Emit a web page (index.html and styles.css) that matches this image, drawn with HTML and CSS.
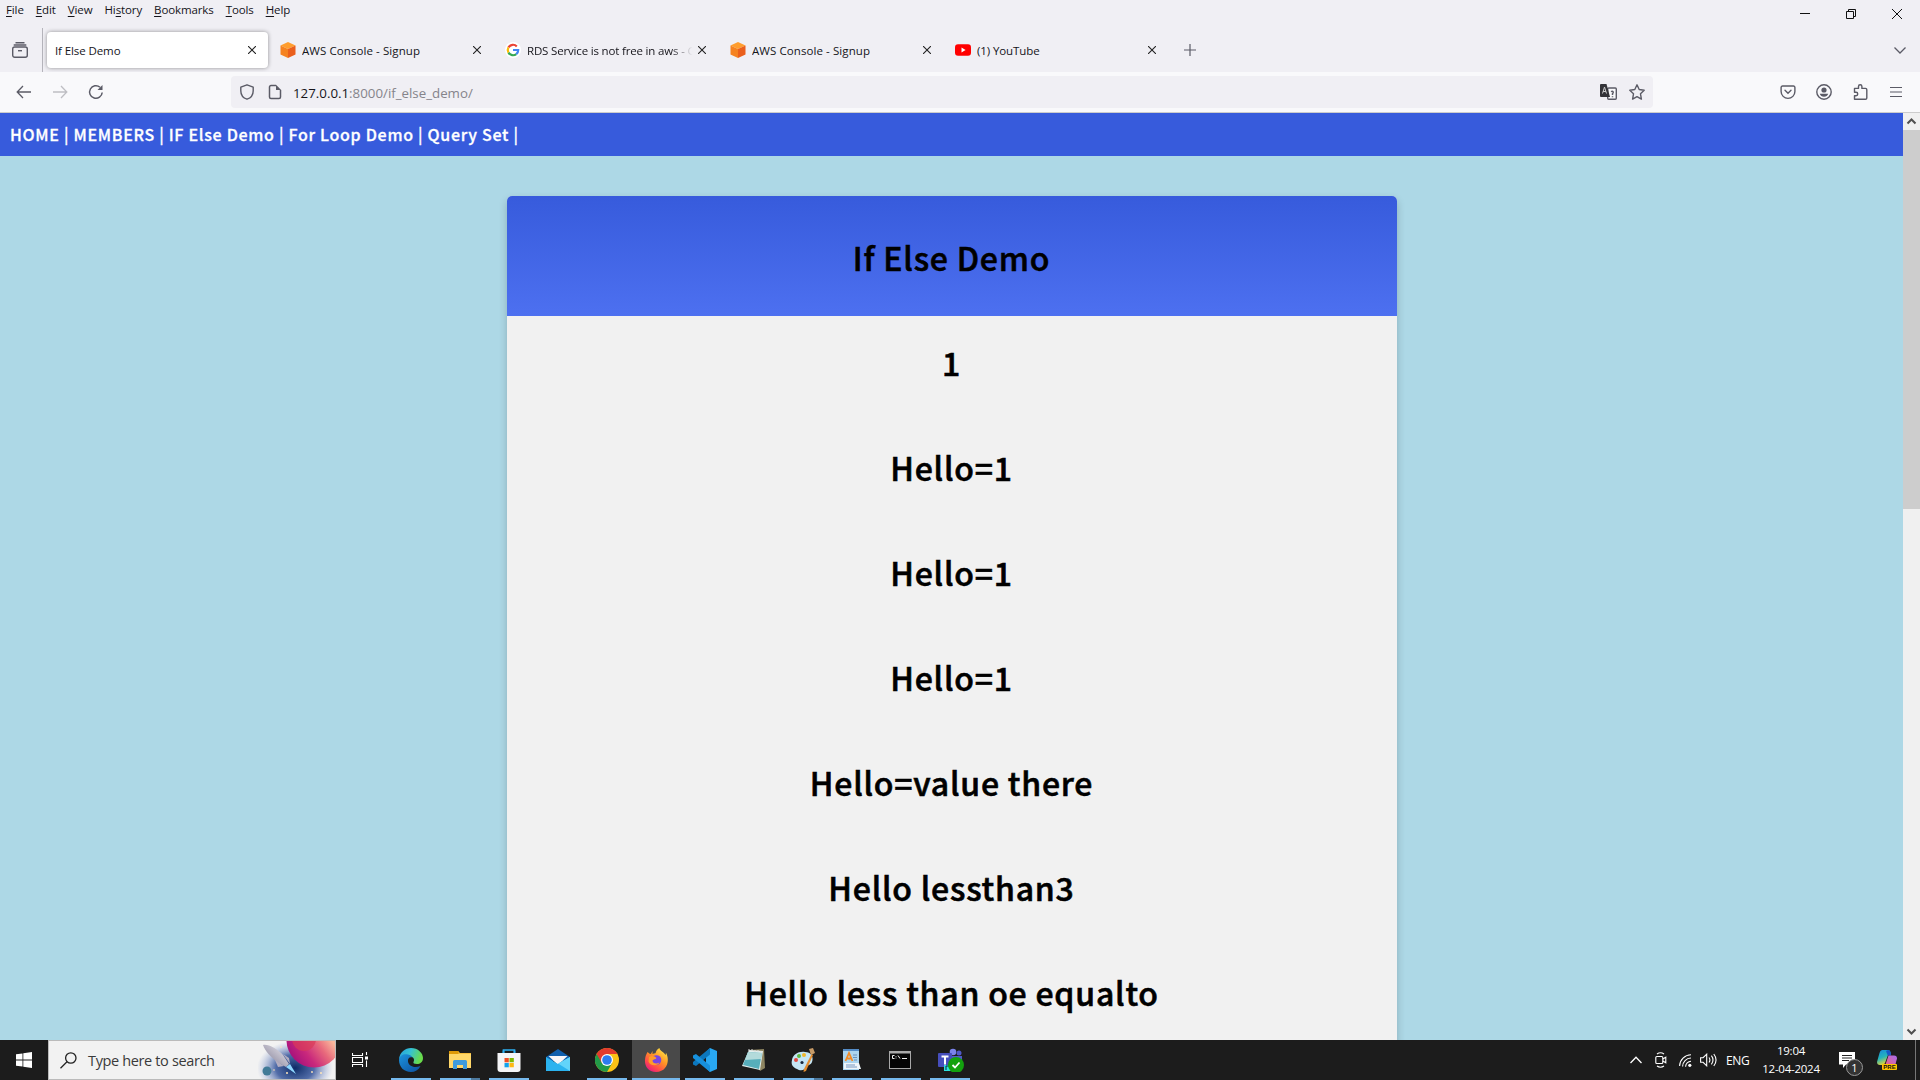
FILE: index.html
```html
<!DOCTYPE html>
<html lang="en">
<head>
<meta charset="utf-8">
<title>If Else Demo</title>
<link rel="stylesheet" href="styles.css">
</head>
<body>
<div class="screen">
  <header class="titlebar">
    <nav class="menus"><span><u>F</u>ile</span><span><u>E</u>dit</span><span><u>V</u>iew</span><span>Hi<u>s</u>tory</span><span><u>B</u>ookmarks</span><span><u>T</u>ools</span><span><u>H</u>elp</span></nav>
    <div class="winbtns">
      <svg width="10" height="10" viewBox="0 0 10 10"><path d="M0 4.500h10" stroke="#111" stroke-width="1"/></svg>
      <svg width="10" height="10" viewBox="0 0 10 10" fill="none" stroke="#111"><path d="M.5 2.500h7v7h-7zM2.500 2.500V.5h7v7h-2"/></svg>
      <svg width="10" height="10" viewBox="0 0 10 10" stroke="#111"><path d="M0 0l10 10M10 0L0 10"/></svg>
    </div>
  </header>

  <div class="tabs">
    <div class="recent"><svg width="16" height="16" viewBox="0 0 16 16" fill="none" stroke="#5b5b66" stroke-width="1.4"><path d="M3.500.7h9M1.700 3h12.600"/><rect x=".7" y="5" width="14.600" height="10.300" rx="2"/><path d="M6 8.700h4"/></svg></div>
    <div class="tab active"><span class="label">If Else Demo</span><svg class="x" viewBox="0 0 8 8"><path d="M0 0l8 8M8 0L0 8"/></svg></div>
    <div class="tab"><svg class="fav" viewBox="0 0 16 16"><path d="M8 0l7.500 3.500L8 7 .5 3.500z" fill="#ff9d2e"/><path d="M.5 3.500L8 7v9L.5 12.500z" fill="#f58220"/><path d="M15.500 3.500L8 7v9l7.500-3.500z" fill="#ea5f1c"/></svg><span class="label aws">AWS Console - Signup</span><svg class="x" viewBox="0 0 8 8"><path d="M0 0l8 8M8 0L0 8"/></svg></div>
    <div class="tab"><svg class="fav" viewBox="0 0 16 16"><circle cx="8" cy="8" r="8" fill="#fff"/><g fill="none" stroke-width="2.200"><path d="M11.800 4.400A5.200 5.200 0 0 0 3.500 5.400" stroke="#ea4335"/><path d="M3.500 5.400a5.200 5.200 0 0 0 0 5.200" stroke="#fbbc05"/><path d="M3.500 10.600a5.200 5.200 0 0 0 7.800 1.500" stroke="#34a853"/><path d="M11.300 12.100A5.200 5.200 0 0 0 13.200 8H8" stroke="#4285f4"/></g></svg><span class="label fade">RDS Service is not free in aws - G</span><svg class="x" viewBox="0 0 8 8"><path d="M0 0l8 8M8 0L0 8"/></svg></div>
    <div class="tab"><svg class="fav" viewBox="0 0 16 16"><path d="M8 0l7.500 3.500L8 7 .5 3.500z" fill="#ff9d2e"/><path d="M.5 3.500L8 7v9L.5 12.500z" fill="#f58220"/><path d="M15.500 3.500L8 7v9l7.500-3.500z" fill="#ea5f1c"/></svg><span class="label aws">AWS Console - Signup</span><svg class="x" viewBox="0 0 8 8"><path d="M0 0l8 8M8 0L0 8"/></svg></div>
    <div class="tab"><svg class="fav" viewBox="0 0 16 16"><rect y="2.300" width="16" height="11.400" rx="3" fill="#f00"/><path d="M6.500 5.600v4.800L10.600 8z" fill="#fff"/></svg><span class="label">(1) YouTube</span><svg class="x" viewBox="0 0 8 8"><path d="M0 0l8 8M8 0L0 8"/></svg></div>
    <svg class="plus" width="12" height="12" viewBox="0 0 12 12" stroke="#5b5b66" stroke-width="1.200"><path d="M6 0v12M0 6h12"/></svg>
    <svg class="alltabs" width="12" height="7" viewBox="0 0 12 7" fill="none" stroke="#5b5b66" stroke-width="1.300"><path d="M.5.5L6 6l5.500-5.500"/></svg>
  </div>

  <div class="toolbar">
    <div class="navbtns">
      <svg width="16" height="16" viewBox="0 0 16 16" fill="none" stroke="#5b5b66" stroke-width="1.300"><path d="M15 8H1.500M7 2L1.200 8 7 14"/></svg>
      <svg width="16" height="16" viewBox="0 0 16 16" fill="none" stroke="#bebec3" stroke-width="1.300"><path d="M1 8h13.500M9 2l5.800 6L9 14"/></svg>
      <svg width="16" height="16" viewBox="0 0 16 16" fill="none" stroke="#5b5b66" stroke-width="1.500"><path d="M14.200 8.500A6.300 6.300 0 1 1 12 3.200"/><path d="M14.500 1v5h-5z" fill="#5b5b66" stroke="none"/></svg>
    </div>
    <div class="urlbar">
      <svg width="16" height="16" viewBox="0 0 16 16" fill="none" stroke="#5b5b66" stroke-width="1.400" stroke-linejoin="round"><path d="M8 .8l6.200 2.300v3.600c0 3.900-2.600 7.300-6.200 8.500-3.600-1.200-6.200-4.600-6.200-8.500V3.100z"/></svg>
      <svg width="16" height="16" viewBox="0 0 16 16" fill="none" stroke="#5b5b66" stroke-width="1.500"><path d="M9 1.500H4A1.500 1.500 0 0 0 2.500 3v10A1.500 1.500 0 0 0 4 14.500h8a1.500 1.500 0 0 0 1.500-1.500V6"/><path d="M9 .8L14.200 6H9z" fill="#5b5b66" stroke="none"/></svg>
      <span class="url">127.0.0.1<i>:8000/if_else_demo/</i></span>
      <svg class="tr" width="17" height="16" viewBox="0 0 17 16"><rect x="7.700" y="4" width="8.600" height="11.300" rx="1" fill="#f9f9fb" stroke="#5b5b66" stroke-width="1.400"/><path d="M1 0h5.500L10 13H1a1 1 0 0 1-1-1V1a1 1 0 0 1 1-1z" fill="#333338"/><path d="M2.500 9.500L4.500 3l2 6.500M3 7.500h3" stroke="#ccc" fill="none"/><path d="M11 7.700c2-1 3 .5 1.500 2V11M12.500 12.300v1" stroke="#5b5b66" stroke-width="1.500" fill="none"/></svg>
      <svg width="16" height="16" viewBox="0 0 16 16" fill="none" stroke="#5b5b66" stroke-width="1.400" stroke-linejoin="round"><path d="M8 .8l2.200 4.700 5 .7-3.700 3.600.9 5.300L8 12.600l-4.400 2.500.9-5.300L.8 6.200l5-.7z"/></svg>
    </div>
    <div class="tools">
      <svg width="16" height="16" viewBox="0 0 16 16" fill="none" stroke="#5b5b66" stroke-width="1.400" stroke-linecap="round"><path d="M2.500 2h11a1.400 1.400 0 0 1 1.400 1.400V7.500a6.900 6.900 0 0 1-13.800 0V3.400A1.400 1.400 0 0 1 2.500 2zM5 6.200l3 3 3-3"/></svg>
      <svg width="16" height="16" viewBox="0 0 16 16"><circle cx="8" cy="8" r="7.200" fill="none" stroke="#5b5b66" stroke-width="1.400"/><circle cx="8" cy="6" r="2.600" fill="#5b5b66"/><path d="M3.800 9.800h8.400c-.5 1.900-2.100 3-4.200 3s-3.700-1.100-4.200-3z" fill="#5b5b66"/></svg>
      <svg width="16" height="16" viewBox="0 0 16 16" fill="none" stroke="#5b5b66" stroke-width="1.400" stroke-linejoin="round"><path d="M1.500 7V4.400h4V2.500a1.700 1.700 0 0 1 3.400 0v1.900h3.600A1.300 1.300 0 0 1 13.800 5.700v8.200a1.300 1.300 0 0 1-1.300 1.300h-11v-3.400H3a1.700 1.700 0 0 0 0-3.500H1.500z"/></svg>
      <svg width="14" height="12" viewBox="0 0 14 12" stroke="#5b5b66" stroke-width="1.200"><path d="M1 1.500h12M1 6h12M1 10.500h12"/></svg>
    </div>
  </div>

  <div class="viewport">
    <main class="page">
      <nav class="sitenav">HOME | MEMBERS | IF Else Demo | For Loop Demo | Query Set |</nav>
      <section class="card">
        <h1 class="cardhead">If Else Demo</h1>
        <div class="rows"><h1>1</h1><h1>Hello=1</h1><h1>Hello=1</h1><h1>Hello=1</h1><h1>Hello=value there</h1><h1>Hello lessthan3</h1><h1>Hello less than oe equalto</h1></div>
      </section>
    </main>
    <aside class="scroll">
      <svg width="17" height="17" viewBox="0 0 17 17" fill="none" stroke="#505050" stroke-width="2"><path d="M4.500 10.500l4-4 4 4"/></svg>
      <div class="thumb"></div>
      <svg width="17" height="17" viewBox="0 0 17 17" fill="none" stroke="#505050" stroke-width="2"><path d="M4.500 6.500l4 4 4-4"/></svg>
    </aside>
  </div>

  <footer class="taskbar">
    <div class="start"><svg width="16" height="16" viewBox="0 0 16 16" fill="#fff"><path d="M0 2.300L6.500 1.400v6.200H0zM7.300 1.300L16 0v7.600H7.300zM0 8.400h6.500v6.200L0 13.700zM7.300 8.400H16V16l-8.700-1.300z"/></svg></div>
    <div class="search">
      <svg width="17" height="17" viewBox="0 0 17 17" fill="none" stroke="#222" stroke-width="1.300"><circle cx="10.800" cy="6" r="5.200"/><path d="M7 9.800L.5 16.300"/></svg>
      <span>Type here to search</span>
      <svg class="art" width="77" height="38" viewBox="0 0 77 38">
        <defs>
          <radialGradient id="sky"><stop offset="0" stop-color="#0d2b66"/><stop offset=".5" stop-color="#34549a" stop-opacity=".85"/><stop offset="1" stop-color="#8fa4d8" stop-opacity="0"/></radialGradient>
          <linearGradient id="planet" gradientUnits="userSpaceOnUse" x1="40" y1="26" x2="74" y2="0"><stop offset="0" stop-color="#a3107c"/><stop offset=".35" stop-color="#c9287c"/><stop offset=".7" stop-color="#e86a7c"/><stop offset="1" stop-color="#f9b79c"/></linearGradient>
          <linearGradient id="rocket" x1="0" y1="1" x2="1" y2="0"><stop offset="0" stop-color="#77738c"/><stop offset="1" stop-color="#f1eff4"/></linearGradient>
        </defs>
        <ellipse cx="37" cy="27" rx="38" ry="27" fill="url(#sky)"/>
        <circle cx="56" cy="-1" r="27.500" fill="url(#planet)"/>
        <circle cx="46" cy="-2" r="12" fill="#d83a58" opacity=".7"/>
        <circle cx="9" cy="30" r="4.500" fill="#417a97"/>
        <path d="M5 4c6-1 14 4 20 10l6 9-3 3-9-5C13 16 7 10 5 4z" fill="url(#rocket)"/>
        <path d="M17 19l3 7 6-1zM25 13l6 4 1 6z" fill="#b3adbf"/>
        <path d="M28 26l4-3 6 10z" fill="#8fd8ff"/>
        <g fill="#ffe6b8"><circle cx="16" cy="29" r=".8"/><circle cx="29" cy="32" r="1"/><circle cx="54" cy="31" r=".9"/><circle cx="63" cy="32" r="1"/><circle cx="23" cy="6" r=".8"/></g>
      </svg>
    </div>
    <div class="taskview"><svg width="16" height="16" viewBox="0 0 16 16" fill="none" stroke="#fff" stroke-width="1.100"><path d="M.5 1v2.500h10V1M.5 15v-2.500h10V15M.5 5.500h10v5H.5zM14.500 0v3M14.500 8.500V15"/><path d="M13 4.500h3v3h-3z" fill="#fff" stroke="none"/></svg></div>
    <div class="apps">
      <div class="app run"><svg viewBox="0 0 24 24"><defs><linearGradient id="e1" x1="0" y1="0" x2="1" y2=".3"><stop offset="0" stop-color="#249fdc"/><stop offset=".5" stop-color="#35c1d4"/><stop offset="1" stop-color="#69dc4b"/></linearGradient><linearGradient id="e2" x1="0" y1="0" x2="1" y2="1"><stop offset="0" stop-color="#1c93dd"/><stop offset="1" stop-color="#0d4f9e"/></linearGradient></defs><path d="M0 11C1 4 6 0 12 0c7 0 12 5 12 10 0 4-3 6-6 6-3 0-4-1-3.500-2 1.500-2.500 0-5.500-4-5.500C6 8.500 2 9 0 11z" fill="url(#e1)"/><path d="M0 12c.5-5 5-6.500 9-5.500 2.500.6 4 2 4.500 3-3-1-5 1-4.500 4C9.700 18 15 20.500 21.500 18 19.500 22 16 24 12 24 5 24 0 19 0 12z" fill="url(#e2)"/></svg></div>
      <div class="app run multi"><svg viewBox="0 0 24 24"><path d="M1 3h9l2 2h11v15H1z" fill="#f6bd3c"/><path d="M1 3h9.500v3H1z" fill="#df9a08"/><path d="M1 6h22v14H1z" fill="#ffd769"/><path d="M5 21v-7.500Q5 12 6.500 12h11q1.500 0 1.500 1.500V21h-4v-4H9v4z" fill="#3e9bdb"/></svg></div>
      <div class="app run"><svg viewBox="0 0 24 24"><path d="M6.500 7V2h11v5" fill="none" stroke="#2caef0" stroke-width="1.700"/><path d="M.5 5h23v16q0 3-3 3h-17q-3 0-3-3z" fill="#f5f5f7"/><path d="M6.500 5V2.500M17.500 5V2.500" stroke="#2caef0" stroke-width="1.700"/><path d="M7.500 10h4.300v4.300H7.500z" fill="#f04f24"/><path d="M12.500 10h4.300v4.300h-4.300z" fill="#7fb900"/><path d="M7.500 15h4.300v4.300H7.500z" fill="#13a2ec"/><path d="M12.500 15h4.300v4.300h-4.300z" fill="#fdb813"/></svg></div>
      <div class="app"><svg viewBox="0 0 24 24"><path d="M0 9L12 1l12 8v4H0z" fill="#0f5fad"/><path d="M2.500 8h19L12 17z" fill="#f6f6f8"/><path d="M0 9l12 7 12-7v14H0z" fill="#2bb3ef"/><path d="M24 9v14L12 15.500z" fill="#62d4fa"/></svg></div>
      <div class="app run"><svg viewBox="0 0 24 24"><circle cx="12" cy="12" r="12" fill="#fbc116"/><path d="M1.600 6A12 12 0 0 0 12 24l5.200-9L12 12z" fill="#229a48"/><path d="M1.600 6A12 12 0 0 1 22.400 6H12L6.800 15z" fill="#e33b2e"/><circle cx="12" cy="12" r="6" fill="#fff"/><circle cx="12" cy="12" r="4.800" fill="#2d7cf0"/></svg></div>
      <div class="app run current"><svg viewBox="0 0 24 24"><defs><linearGradient id="ff" x1=".9" y1="0" x2=".2" y2="1"><stop offset="0" stop-color="#fff04a"/><stop offset=".45" stop-color="#ff9425"/><stop offset=".75" stop-color="#ff4b4a"/><stop offset="1" stop-color="#e31587"/></linearGradient></defs><path d="M3.500 4l2.500 2 1-.2L8.500 3v3c1-.5 2-.7 3-.7C12 3 13 1 15.500 0c0 3 4 3.500 6 7 .5-.8.500-1.500.3-2.500C26 11 24 24 12 24 4 24 .5 18 1 12c.2-3 1-5.500 2.500-8z" fill="url(#ff)"/><circle cx="12.500" cy="12" r="4.800" fill="#7845e3"/><path d="M5 9c3-2 6-1 7.500 1-1 1.700-3 1-4 2.500 0 3 4 4 7 2-2 4-10 3.500-11-1z" fill="#ff9b29"/></svg></div>
      <div class="app run"><svg viewBox="0 0 24 24"><path d="M17 0l7 3v18l-7 3-4-4V4z" fill="#29a8f2"/><path d="M17 0v6.500L3 18 0 16.500 0 14z" fill="#0c77bd"/><path d="M17 24v-6.500L3 6 0 7.500V10z" fill="#1790dc"/></svg></div>
      <div class="app run"><svg viewBox="0 0 24 24"><path d="M7 2l15-1 1 19-5 3z" fill="#8e8561"/><path d="M7 2l14 1-3 19L0 18z" fill="#e4f0ef"/><path d="M6 4l14 1-3 16L1 17z" fill="#57aebb"/><path d="M6 4l14 1-1 6L3 12z" fill="#b3dbdb"/><path d="M7 1v2m3-2v2m3-1v2m3-2v2m3-1v2" stroke="#ddd"/></svg></div>
      <div class="app run multi"><svg viewBox="0 0 24 24"><path d="M1 12C2 6 8 3 14 4c6 0 9 5 7 10-1 3-4 3-5 4-2 5-7 5-10 3C1 19 0 16 1 12z" fill="#c4e5f4"/><circle cx="5" cy="12" r="2" fill="#e1473f"/><circle cx="8" cy="8" r="2" fill="#5db943"/><circle cx="13" cy="7" r="2" fill="#f1b62c"/><circle cx="11" cy="14.500" r="1.600" fill="#17283f"/><path d="M20.500 6l1.500 1-7 16-2.500 1 .5-3z" fill="#e38d30"/><path d="M18 1l4-1 2 5-4 2z" fill="#c79b67"/></svg></div>
      <div class="app run"><svg viewBox="0 0 24 24"><path d="M3 1h16v21H3z" fill="#acd5ef"/><path d="M3 1h16v2H3z" fill="#548cc7"/><path d="M4 15h15l2 6H4z" fill="#eef5fa"/><path d="M5.500 13L9 5l3.500 8M7 10.500h4" stroke="#f28a24" stroke-width="1.800" fill="none"/><path d="M13 7h4m-4 2.500h4m-3 2.500h3M6 17h9M6 19h11" stroke="#587fae" stroke-width=".8"/></svg></div>
      <div class="app run"><svg viewBox="0 0 24 24"><path d="M0 3h22v18H0z" fill="#a9a9a9"/><path d="M1 5.500h20V20H1z" fill="#050505"/><path d="M5.500 7.500H3.500v3h2M7 8v.7m0 1v.7M9 7.500l2 3M13 10.500h5" stroke="#eee" fill="none"/></svg></div>
      <div class="app run teams"><svg viewBox="0 0 26 24"><circle cx="15" cy="4" r="3.300" fill="#7b83eb"/><circle cx="21" cy="5" r="2.500" fill="#5059c9"/><path d="M11 8h13v8q-3 6-10 4z" fill="#5059c9"/><rect y="5" width="14" height="14" rx="1" fill="#464ebc"/><path d="M3.500 8.500h7M7 8.500v8" stroke="#fff" stroke-width="2"/><path d="M6 17h7v6H6z" fill="#2ce3dd"/><path d="M8 22v-4h3" stroke="#124" fill="none"/><circle cx="18" cy="17" r="8" fill="#13a10e"/><path d="M14.500 17l2.500 2.500 4.500-5" stroke="#fff" stroke-width="1.800" fill="none"/></svg></div>
    </div>
    <div class="tray">
      <svg class="chev" width="12" height="8" viewBox="0 0 12 8" fill="none" stroke="#fff" stroke-width="1.300"><path d="M.5 7L6 1.200 11.500 7"/></svg>
      <svg class="meet" width="12" height="16" viewBox="0 0 12 16" fill="none" stroke="#fff" stroke-width="1.100"><rect x=".8" y="4.500" width="7" height="7" rx="1"/><path d="M7.800 7l3-1.700v5.500l-3-1.700M2 2q3.500-2.500 7 0M2 14q3.500 2.500 7 0"/></svg>
      <svg class="wifi" width="13" height="13" viewBox="0 0 13 13" fill="none" stroke="#fff" stroke-width="1.100"><path d="M.6 12A11.500 11.500 0 0 1 12 .8M3.600 12.500A8.500 8.500 0 0 1 12 4M6.600 12.700A5.500 5.500 0 0 1 12 7.200"/><circle cx="10.800" cy="11.300" r="1.600" fill="#fff" stroke="none"/></svg>
      <svg class="vol" width="17" height="14" viewBox="0 0 17 14" fill="none" stroke="#fff" stroke-width="1.100"><path d="M.6 4.700h2.500L6.700 1.200v11.600L3.100 9.300H.6zM9 4.500q1.800 2.500 0 5M11.400 2.700q3.200 4.300 0 8.600M13.800 1q4.500 6 0 12"/></svg>
      <span class="lang">ENG</span>
      <div class="clock"><span>19:04</span><span>12-04-2024</span></div>
      <div class="note"><svg width="16" height="16" viewBox="0 0 16 16"><path d="M0 0h16v12.500H7L4 16v-3.500H0z" fill="#fff"/><path d="M3 3.500h10M3 6h10M3 8.500h7" stroke="#222"/></svg><b>1</b></div>
      <div class="copilot"><svg width="20" height="20" viewBox="0 0 20 20"><defs><linearGradient id="c1" x1="0" y1="0" x2=".4" y2="1"><stop offset="0" stop-color="#1687df"/><stop offset=".55" stop-color="#25b4ba"/><stop offset="1" stop-color="#e8d736"/></linearGradient><linearGradient id="c2" x1="1" y1="0" x2="0" y2="1"><stop offset="0" stop-color="#a66bf0"/><stop offset="1" stop-color="#f2637c"/></linearGradient></defs><path d="M5 0h6q2 0 2.500 2l.5 3h-3L8 13q-.7 2-3 2H3q-3 0-3-3l2.500-9Q3 .5 5 0z" fill="url(#c1)"/><path d="M11 0q2 0 2.500 2l.7 3.500h-3.500L9 1z" fill="#1858c7"/><path d="M11.500 5.500H17q3 0 3 3L18 16H8z" fill="url(#c2)"/></svg><em>PRE</em></div>
      <div class="desk"></div>
    </div>
  </footer>
</div>
</body>
</html>
```
FILE: styles.css
```css
* { box-sizing: border-box; }
body { margin: 0; font-family: "Open Sans", "Noto Sans", sans-serif; color: #15141a; }
svg { display: block; flex: none; }
.screen { width: 1920px; height: 1080px; display: flex; flex-direction: column; overflow: hidden; background: #f0eff4; }

.titlebar { height: 28px; display: flex; justify-content: space-between; }
.menus { display: flex; gap: 12px; padding: 2px 0 0 6px; font-size: 11.500px; line-height: 16px; letter-spacing: -.11px; }
.menus u { text-underline-offset: 2px; }
.winbtns { display: flex; gap: 36px; padding: 9px 18px 0 0; }

.tabs { height: 44px; display: flex; align-items: center; padding: 0 14px 0 12px; }
.recent { width: 31px; height: 44px; display: flex; align-items: center; border-right: 1px solid #b5b4bb; margin-right: 4px; }
.tab { width: 221px; height: 36px; margin-right: 4px; border-radius: 4px; display: flex; align-items: center; gap: 6px; padding: 0 12px 0 8px; font-size: 11.500px; letter-spacing: -.1px; }
.tab.active { background: #fff; box-shadow: 0 0 4px rgba(0,0,0,.4); }
.fav { width: 16px; height: 16px; }
.label { flex: 1; min-width: 0; white-space: nowrap; overflow: hidden; }
.label.aws { letter-spacing: .08px; }
.label.fade { letter-spacing: -.17px; margin-right: -4px; mask-image: linear-gradient(90deg, #000 85%, transparent 98%); }
.x { width: 8px; height: 8px; stroke: #222; stroke-width: 1.100; }
.plus { margin-left: 12px; }
.alltabs { margin-left: auto; }

.toolbar { height: 41px; background: #f9f9fb; border-bottom: 1px solid #ccc; display: flex; align-items: center; }
.navbtns { width: 231px; display: flex; gap: 20px; padding-left: 16px; }
.urlbar { width: 1422px; height: 32px; border-radius: 4px; background: #f0eff4; display: flex; align-items: center; gap: 12px; padding: 0 8px; }
.url { flex: 1; margin-left: -2px; padding-top: 1px; font-size: 13.300px; letter-spacing: 0; }
.url i { font-style: normal; color: #85848b; }
.tools { flex: 1; display: flex; align-items: center; justify-content: space-between; padding: 0 17px 0 127px; }

.viewport { height: 927px; display: flex; }
.page { flex: 1; background: #add8e6; overflow: hidden; font-family: "Noto Sans CJK JP", sans-serif; }
.sitenav { height: 43px; background: #375bdc; color: #fff; font-size: 16px; font-weight: 500; line-height: 43px; padding-left: 10px; letter-spacing: .71px; white-space: pre; -webkit-text-stroke: .3px #fff; }
.card { width: 890px; height: 1400px; margin: 40px auto 0; background: #f1f1f1; border-radius: 5px; overflow: hidden; box-shadow: 0 4px 8px rgba(0,0,0,.2); color: #000; text-align: center; }
.card h1 { margin: 0; font-size: 32px; font-weight: 500; letter-spacing: .78px; line-height: 105px; height: 105px; -webkit-text-stroke: .6px #000; }
.card .cardhead { height: 120px; line-height: 122px; background: linear-gradient(#375bdc, #4d70f0); }
.rows { margin-top: -6px; }
.scroll { width: 17px; background: #f0f0f0; display: flex; flex-direction: column; }
.thumb { height: 379px; background: #cdcdcd; margin-bottom: auto; }

.taskbar { height: 40px; background: #1c1c1c; display: flex; color: #fff; }
.start { width: 48px; display: flex; align-items: center; justify-content: center; }
.search { width: 288px; background: #f2f2f2; border: 1px solid #bbb; display: flex; align-items: center; padding-left: 11px; color: #3a3a3a; font-size: 14.500px; }
.search span { margin-left: 11px; letter-spacing: -.36px; white-space: nowrap; }
.art { margin-left: auto; }
.taskview { width: 48px; display: flex; align-items: center; justify-content: center; }
.apps { display: flex; gap: 1px; padding-left: 3px; }
.app { width: 48px; display: flex; align-items: center; justify-content: center; background: linear-gradient(#76b9ed, #76b9ed) 50% 100% / 0 2px no-repeat; }
.app svg { width: 24px; height: 24px; }
.app.run { background-size: 40px 2px; }
.app.multi { background-image: linear-gradient(90deg, #76b9ed 31px, #4d7a9f 31px); }
.app.current { background-color: #494949; background-size: 48px 2px; }
.app.teams svg { width: 26px; margin-left: 2px; }
.tray { margin-left: auto; display: flex; align-items: center; font-size: 12px; }
.meet { margin-left: 13px; }
.wifi { margin-left: 12px; }
.vol { margin-left: 8px; }
.lang { margin-left: 9px; width: 24px; letter-spacing: -.4px; }
.clock { width: 60px; margin-left: 11px; margin-right: 1px; display: flex; flex-direction: column; align-items: center; line-height: 18px; font-size: 11.500px; letter-spacing: -.25px; white-space: nowrap; }
.note { margin-left: 17px; position: relative; }
.note b { position: absolute; left: 7px; top: 7px; width: 17px; height: 17px; border: 1px solid #999; border-radius: 50%; background: #333; font-size: 11px; line-height: 15px; text-align: center; font-weight: 400; }
.copilot { margin-left: 22px; position: relative; }
.copilot em { position: absolute; left: 5px; top: 14px; width: 15px; height: 6px; border-radius: 1px; background: #ffc400; color: #111; font: 700 6px/6px "Liberation Sans", sans-serif; text-align: center; }
.desk { width: 1px; height: 40px; background: #777; margin: 0 4px 0 18px; }
```
